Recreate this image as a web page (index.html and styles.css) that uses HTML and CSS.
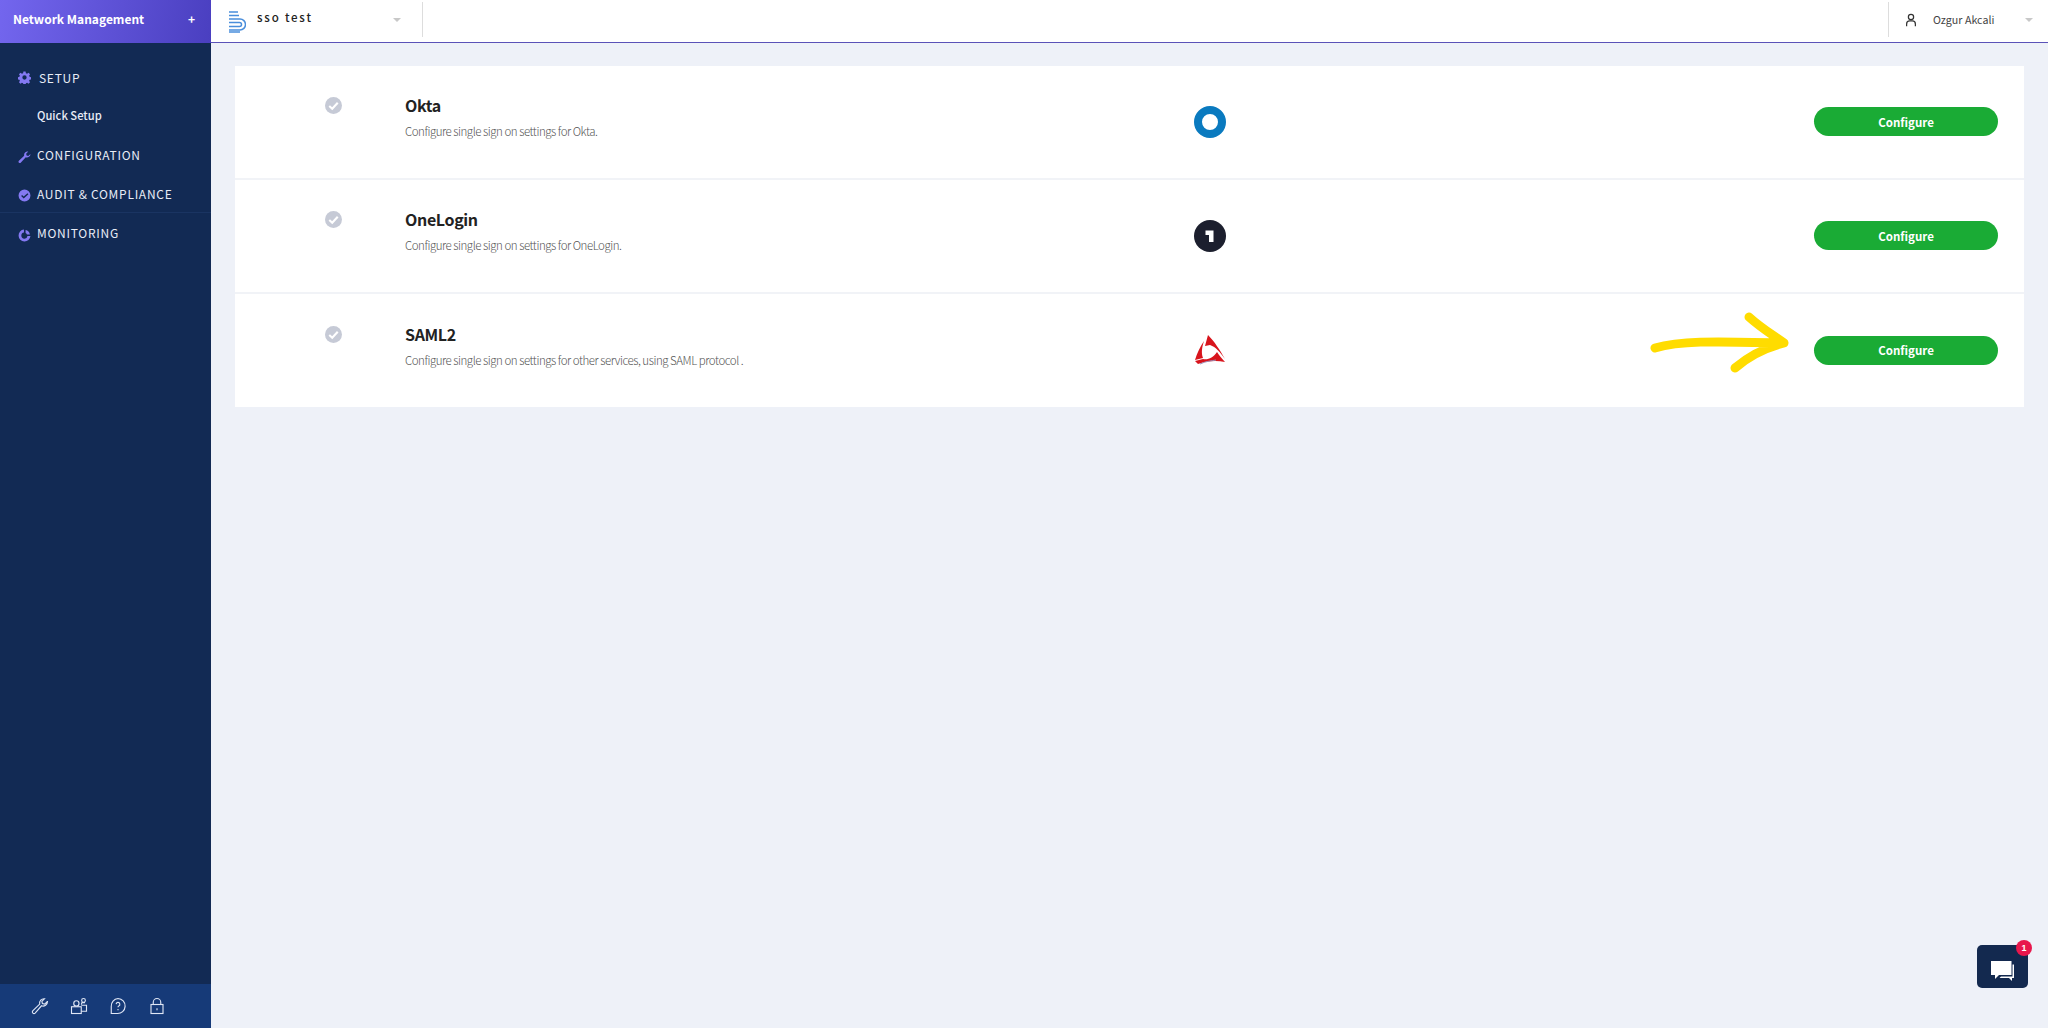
FILE: index.html
```html
<!DOCTYPE html>
<html lang="en">
<head>
  <meta charset="UTF-8">
  <meta name="viewport" content="width=device-width, initial-scale=1.0">
  <title>SSO settings</title>
  <link rel="stylesheet" href="styles.css">
</head>
<body>
  <div class="app">
    <aside class="sidebar">
      <div class="brand">
        <span>Network Management</span>
        <span class="brand-plus">+</span>
      </div>
      <nav class="nav">
        <a class="nav-item nav-setup">
          <svg class="nav-icon" viewBox="0 0 24 24"><path fill-rule="evenodd" d="M10 1h4l.6 3 2.2.9 2.6-1.7 2.8 2.8-1.7 2.6.9 2.2 3 .6v4l-3 .6-.9 2.2 1.7 2.6-2.8 2.8-2.6-1.7-2.2.9-.6 3h-4l-.6-3-2.2-.9-2.6 1.7-2.8-2.8 1.7-2.6-.9-2.2-3-.6v-4l3-.6.9-2.2L1.800 6l2.800-2.800 2.600 1.700 2.200-.9zM12 8a4 4 0 1 0 0 8 4 4 0 0 0 0-8z"/></svg>
          SETUP
        </a>
        <a class="nav-sub">Quick Setup</a>
        <a class="nav-item">
          <svg class="nav-icon" viewBox="0 0 24 24"><path d="M23 5.500a6.500 6.500 0 0 1-8.700 6.100L5 21.500a2.300 2.300 0 0 1-3.300-3.300l9.700-9.500A6.500 6.500 0 0 1 19 1l-4 4 .8 3.200 3.200.8z"/></svg>
          CONFIGURATION
        </a>
        <a class="nav-item nav-divided">
          <svg class="nav-icon" viewBox="0 0 24 24"><path fill-rule="evenodd" d="M12 1a11 11 0 1 1 0 22 11 11 0 0 1 0-22zm5.500 7L10.500 14 7.500 11.200 5.800 13l4.700 4.500 8.700-7.700z"/></svg>
          AUDIT &amp; COMPLIANCE
        </a>
        <a class="nav-item">
          <svg class="nav-icon" viewBox="0 0 24 24"><path d="M11 1v5.500a5.700 5.700 0 1 0 6.500 6.500H23A11 11 0 1 1 11 1z"/><path d="M14 2a10 10 0 0 1 8 8h-5.500A5 5 0 0 0 14 7.500z"/></svg>
          MONITORING
        </a>
      </nav>
      <div class="side-footer">
        <svg class="foot-icon" viewBox="0 0 24 24"><path d="M22 6a6 6 0 0 1-8 5.700L5.500 21.500a2.200 2.200 0 0 1-3.200-3L11.600 9.500A6 6 0 0 1 18 2.300l-3.500 3.500.7 3 3 .7L21.700 6z"/></svg>
        <svg class="foot-icon" viewBox="0 0 24 24"><rect x="2" y="13" width="13" height="9"/><circle cx="8.500" cy="8.500" r="3.500"/><circle cx="18" cy="4.500" r="2.500"/><path d="M15 11h7v8h-7M15 10l1-2.500h4"/></svg>
        <svg class="foot-icon" viewBox="0 0 24 24"><path d="M12 2a10 10 0 1 1-1 20H3v-9.500A10 10 0 0 1 12 2z"/><path d="M9.500 9.500A2.500 2.500 0 1 1 13 12c-.7.400-1 .9-1 1.800M12 16v1.500"/></svg>
        <svg class="foot-icon" viewBox="0 0 24 24"><rect x="4" y="10" width="16" height="12"/><path d="M7 10V7a5 5 0 0 1 10 0v3M12 15v2.500"/></svg>
      </div>
    </aside>

    <div class="main">
      <header class="topbar">
        <div class="org">
          <svg class="org-logo" viewBox="0 0 18 22"><path d="M1 1h9M1 4.500h10M1 8h11a5.500 5.500 0 0 1 0 11H1M1 11.500h10.500a2 2 0 0 1 0 4H1M1 21h11" fill="none" stroke="#4a8edb" stroke-width="1.500"/></svg>
          <span class="org-name">sso test</span>
          <span class="caret"></span>
        </div>
        <div class="user">
          <svg class="user-icon" viewBox="0 0 16 16"><circle cx="8" cy="4.500" r="3"/><path d="M3 15v-2.500A3.500 3.500 0 0 1 6.500 9h3a3.500 3.500 0 0 1 3.500 3.500V15"/></svg>
          <span class="user-name">Ozgur Akcali</span>
          <span class="caret"></span>
        </div>
      </header>

      <section class="sso-list">
        <div class="sso-row">
          <span class="check"><svg viewBox="0 0 16 16"><path d="M4 8.500l2.800 2.500L12 5.500"/></svg></span>
          <div class="sso-text">
            <h2>Okta</h2>
            <p>Configure single sign on settings for Okta.</p>
          </div>
          <svg class="sso-logo" viewBox="0 0 32 32"><circle cx="16" cy="16" r="12" fill="none" stroke="#0a7abf" stroke-width="8"/></svg>
          <button class="configure">Configure</button>
        </div>
        <div class="sso-row">
          <span class="check"><svg viewBox="0 0 16 16"><path d="M4 8.500l2.800 2.500L12 5.500"/></svg></span>
          <div class="sso-text">
            <h2>OneLogin</h2>
            <p>Configure single sign on settings for OneLogin.</p>
          </div>
          <svg class="sso-logo" viewBox="0 0 32 32"><circle cx="16" cy="16" r="16" fill="#1c1f2e"/><path d="M11.500 10.500h8v11.500H15v-7h-3.500z" fill="#fff"/></svg>
          <button class="configure">Configure</button>
        </div>
        <div class="sso-row">
          <span class="check"><svg viewBox="0 0 16 16"><path d="M4 8.500l2.800 2.500L12 5.500"/></svg></span>
          <div class="sso-text">
            <h2>SAML2</h2>
            <p>Configure single sign on settings for other services, using SAML protocol .</p>
          </div>
          <svg class="sso-logo" viewBox="0 0 32 32">
            <path d="M14 1C20 7 26 16 31 25 26 18 22 13 16 11L11 12Z" fill="#d8141c"/>
            <path d="M10 7C6 13 3 19 1 26L9 24C7 19 8 13 10 7Z" fill="#d8141c"/>
            <path d="M1 27L9 25C14 26 19 24 23 18 25 21 28 25 31 28 22 26 12 27 4 30Z" fill="#d8141c"/>
            <path d="M6 30C12 27 17 27 22 26" fill="none" stroke="#9a8fb8" stroke-width="1"/>
          </svg>
          <button class="configure">Configure</button>
          <svg class="arrow" viewBox="0 0 150 70"><path d="M6 37C30 30 60 30 134 32M100 6c12 11 24 18 35 26-16 4-34 12-49 25" fill="none" stroke="#ffdc00" stroke-width="9" stroke-linecap="round" stroke-linejoin="round"/></svg>
        </div>
      </section>
    </div>
  </div>

  <button class="chat">
    <svg viewBox="0 0 24 22"><path d="M1 1h20.500v14H9l-4 4v-4H1z" fill="#fff"/><path d="M22.500 4.500H24V18h-2v3l-3-3H9.500l1.500-1.500h11.500z" fill="#fff"/></svg>
    <span class="chat-badge">1</span>
  </button>
</body>
</html>
```

FILE: styles.css
```css
* {
  box-sizing: border-box;
}
body {
  margin: 0;
  background: #eef1f8;
  font-family: 'Noto Sans CJK JP', 'Noto Sans', sans-serif;
  color: #222;
}
.app {
  display: flex;
  height: 100vh;
}

/* sidebar */
.sidebar {
  width: 211px;
  flex-shrink: 0;
  background: #122a54;
  display: flex;
  flex-direction: column;
}
.brand {
  height: 43px;
  padding: 0 16px 7px 13px;
  display: flex;
  align-items: center;
  justify-content: space-between;
  background: linear-gradient(100deg, #7366ee, #4a3fc0);
  color: #fff;
  font-size: 12px;
  font-weight: 700;
}
.nav {
  flex: 1;
  padding-top: 15px;
}
.nav-item {
  height: 39px;
  padding-left: 18px;
  display: flex;
  align-items: center;
  gap: 6px;
  color: #e8ecf6;
  font-size: 12px;
  letter-spacing: .72px;
}
.nav-setup {
  gap: 8px;
}
.nav-divided {
  border-bottom: 1px solid #1a3462;
}
.nav-icon {
  width: 13px;
  height: 13px;
  margin-top: 5px;
  fill: #8479f2;
}
.nav-setup .nav-icon {
  margin-top: 0;
}
.nav-sub {
  display: flex;
  align-items: center;
  height: 38px;
  padding: 0 0 2px 37px;
  color: #e8ecf6;
  font-size: 11.2px;
  font-weight: 500;
}
.side-footer {
  height: 44px;
  padding-left: 31px;
  display: flex;
  align-items: center;
  gap: 21px;
  background: #163a78;
}
.foot-icon {
  width: 18px;
  height: 18px;
  fill: none;
  stroke: #dfe6f5;
  stroke-width: 1.500;
}

/* top bar */
.main {
  flex: 1;
  min-width: 0;
}
.topbar {
  height: 43px;
  display: flex;
  justify-content: space-between;
  background: #fff;
  border-bottom: 1px solid #5a52b8;
}
.org {
  width: 212px;
  height: 35px;
  margin-top: 2px;
  padding-left: 17px;
  display: flex;
  align-items: center;
  border-right: 1px solid #ddd;
}
.org-logo {
  width: 18px;
  height: 22px;
  margin-top: 4px;
}
.org-name {
  margin: 0 0 5px 11px;
  font-size: 11.500px;
  font-weight: 500;
  letter-spacing: 1.800px;
  flex: 1;
}
.org .caret {
  margin-right: 21px;
}
.caret {
  width: 0;
  height: 0;
  border-left: 4px solid transparent;
  border-right: 4px solid transparent;
  border-top: 4px solid #c8c8c8;
}
.user {
  width: 160px;
  height: 35px;
  margin-top: 2px;
  padding-left: 15px;
  display: flex;
  align-items: center;
  border-left: 1px solid #ddd;
}
.user-icon {
  width: 14px;
  height: 14px;
  fill: none;
  stroke: #333;
  stroke-width: 1.400;
}
.user-name {
  margin-left: 15px;
  flex: 1;
  font-size: 10.700px;
  color: #444;
}
.user .caret {
  margin-right: 15px;
}

/* sso rows */
.sso-list {
  margin: 23px 24px 0;
  background: #fff;
}
.sso-row {
  position: relative;
  display: grid;
  grid-template-columns: 170px 789px 32px 1fr;
  align-items: center;
  height: 114px;
  padding: 0 26px 1px 0;
  border-bottom: 2px solid #f1f3f7;
}
.sso-row:last-child {
  height: 113px;
  padding-bottom: 1px;
  border-bottom: none;
}
.check {
  justify-self: start;
  align-self: start;
  margin: 31px 0 0 90px;
  width: 17px;
  height: 17px;
  border-radius: 50%;
  background: #c6cad6;
}
.sso-row:last-child .check {
  margin-top: 32px;
}
.check svg {
  display: block;
  fill: none;
  stroke: #fff;
  stroke-width: 2;
}
.sso-text {
  align-self: start;
  padding-top: 26px;
}
.sso-row:last-child .sso-text {
  padding-top: 27px;
}
.sso-text h2 {
  margin: 0;
  font-size: 16px;
  font-weight: 700;
  letter-spacing: -.35px;
  line-height: 26px;
}
.sso-text p {
  margin: 4px 0 0;
  font-size: 11.500px;
  font-weight: 300;
  letter-spacing: -.47px;
  line-height: 18px;
  color: #555;
}
.sso-logo {
  width: 32px;
  height: 32px;
}
.configure {
  justify-self: end;
  width: 184px;
  height: 29px;
  padding: 0;
  border: none;
  border-radius: 15px;
  background: #1aab35;
  color: #fff;
  font-family: inherit;
  font-size: 11.500px;
  font-weight: 700;
  cursor: pointer;
}
.arrow {
  position: absolute;
  left: 1414px;
  top: 17px;
  width: 150px;
  height: 70px;
}

/* chat */
.chat {
  position: fixed;
  left: 1977px;
  top: 945px;
  width: 51px;
  height: 43px;
  padding: 0;
  border: none;
  border-radius: 5px;
  background: #13294f;
}
.chat svg {
  display: block;
  width: 24px;
  height: 22px;
  margin: 9px 0 0 13px;
}
.chat-badge {
  position: absolute;
  top: -5px;
  right: -4px;
  width: 16px;
  height: 16px;
  border-radius: 50%;
  background: #e8174c;
  color: #fff;
  font-size: 9px;
  font-weight: 700;
  line-height: 16px;
  text-align: center;
}
```
